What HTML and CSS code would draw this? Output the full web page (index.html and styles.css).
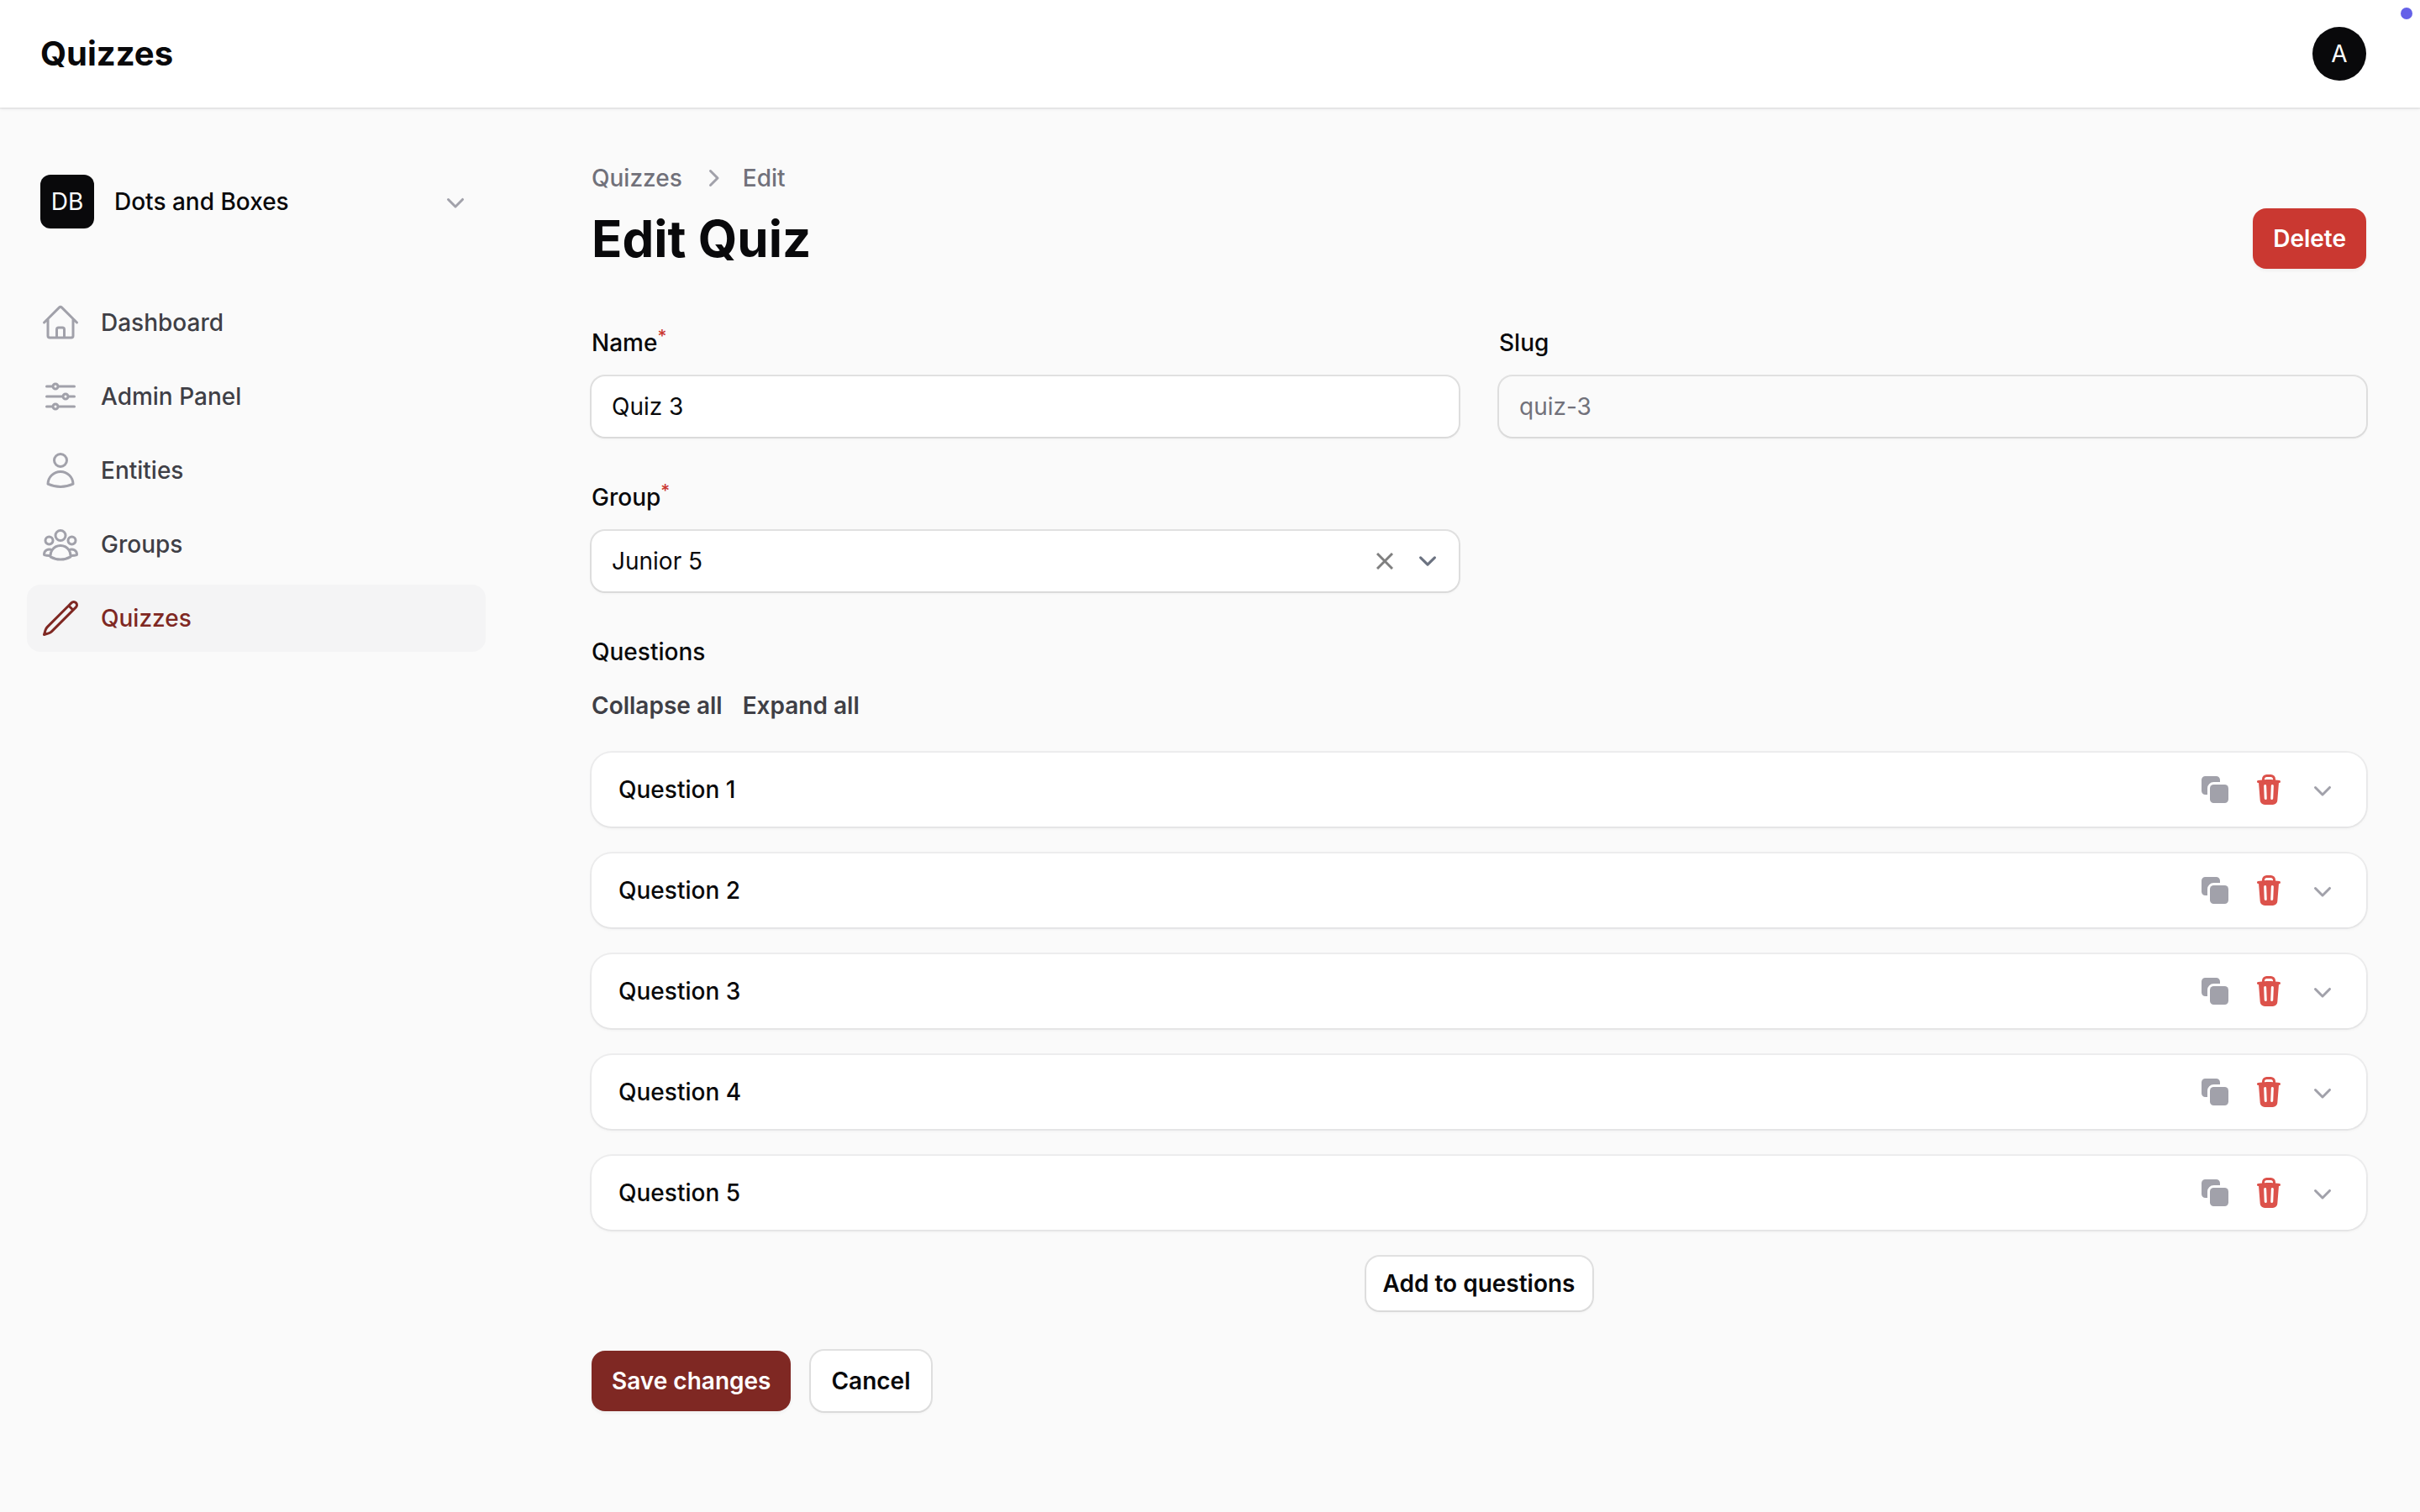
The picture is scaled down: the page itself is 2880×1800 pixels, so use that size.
FILE: index.html
```html
<!DOCTYPE html>
<html lang="en">
<head>
<meta charset="utf-8">
<meta name="viewport" content="width=device-width, initial-scale=1">
<title>Edit Quiz - Quizzes</title>
<link rel="stylesheet" href="styles.css">
</head>
<body>
<svg class="sprite" aria-hidden="true">
  <symbol id="chevron-down" viewBox="0 0 20 20"><path fill-rule="evenodd" d="M5.22 8.22a.75.75 0 0 1 1.06 0L10 11.94l3.72-3.72a.75.75 0 1 1 1.06 1.06l-4.25 4.25a.75.75 0 0 1-1.06 0L5.22 9.28a.75.75 0 0 1 0-1.06Z"/></symbol>
  <symbol id="clone" viewBox="0 0 20 20"><path d="M2 4.25A2.25 2.25 0 0 1 4.25 2h6.5A2.25 2.25 0 0 1 13 4.25V5.5H9.25A3.75 3.75 0 0 0 5.5 9.25V13H4.25A2.25 2.25 0 0 1 2 10.75v-6.5Z"/><path d="M9.25 7A2.25 2.25 0 0 0 7 9.25v6.5A2.25 2.25 0 0 0 9.25 18h6.5A2.25 2.25 0 0 0 18 15.75v-6.5A2.25 2.25 0 0 0 15.75 7h-6.5Z"/></symbol>
  <symbol id="trash" viewBox="0 0 20 20"><path fill-rule="evenodd" d="M8.75 1A2.75 2.75 0 0 0 6 3.75v.443c-.795.077-1.584.176-2.365.298a.75.75 0 1 0 .23 1.482l.149-.022.841 10.518A2.75 2.75 0 0 0 7.596 19h4.807a2.75 2.75 0 0 0 2.742-2.53l.841-10.52.149.023a.75.75 0 0 0 .23-1.482A41.03 41.03 0 0 0 14 4.193V3.75A2.75 2.75 0 0 0 11.25 1h-2.5ZM10 4c.84 0 1.673.025 2.5.075V3.75c0-.69-.56-1.25-1.25-1.25h-2.5c-.69 0-1.25.56-1.25 1.25v.325C8.327 4.025 9.16 4 10 4ZM8.58 7.72a.75.75 0 0 0-1.5.06l.3 7.5a.75.75 0 1 0 1.5-.06l-.3-7.5Zm4.34.06a.75.75 0 1 0-1.5-.06l-.3 7.5a.75.75 0 1 0 1.5.06l.3-7.5Z"/></symbol>
</svg>

<header class="topbar">
  <a class="brand" href="#">Quizzes</a>
  <button class="avatar avatar-round" type="button" aria-label="User menu">A</button>
  <span class="status-dot"></span>
</header>

<div class="layout">
  <aside class="sidebar">
    <button class="tenant" type="button">
      <span class="avatar">DB</span>
      <span class="tenant-name">Dots and Boxes</span>
      <svg class="icon"><use href="#chevron-down"/></svg>
    </button>
    <nav class="nav" aria-label="Main">
      <a class="nav-item" href="#">
        <svg class="nav-icon" viewBox="0 0 24 24"><path d="m2.25 12 8.954-8.955c.44-.439 1.152-.439 1.591 0L21.75 12M4.5 9.75v10.125c0 .621.504 1.125 1.125 1.125H9.75v-4.875c0-.621.504-1.125 1.125-1.125h2.25c.621 0 1.125.504 1.125 1.125V21h4.125c.621 0 1.125-.504 1.125-1.125V9.75M8.25 21h8.25"/></svg>
        <span>Dashboard</span>
      </a>
      <a class="nav-item" href="#">
        <svg class="nav-icon" viewBox="0 0 24 24"><path d="M10.5 6h9.75M10.5 6a1.5 1.5 0 1 1-3 0m3 0a1.5 1.5 0 1 0-3 0M3.75 6H7.5m3 12h9.75m-9.75 0a1.5 1.5 0 0 1-3 0m3 0a1.5 1.5 0 0 0-3 0m-3.75 0H7.5m9-6h3.75m-3.75 0a1.5 1.5 0 0 1-3 0m3 0a1.5 1.5 0 0 0-3 0m-9.75 0h9.75"/></svg>
        <span>Admin Panel</span>
      </a>
      <a class="nav-item" href="#">
        <svg class="nav-icon" viewBox="0 0 24 24"><path d="M15.75 6a3.75 3.75 0 1 1-7.5 0 3.75 3.75 0 0 1 7.5 0ZM4.501 20.118a7.5 7.5 0 0 1 14.998 0A17.933 17.933 0 0 1 12 21.75c-2.676 0-5.216-.584-7.499-1.632Z"/></svg>
        <span>Entities</span>
      </a>
      <a class="nav-item" href="#">
        <svg class="nav-icon" viewBox="0 0 24 24"><path d="M18 18.72a9.094 9.094 0 0 0 3.741-.479 3 3 0 0 0-4.682-2.72m.94 3.198.001.031c0 .225-.012.447-.037.666A11.944 11.944 0 0 1 12 21c-2.17 0-4.207-.576-5.963-1.584A6.062 6.062 0 0 1 6 18.719m12 0a5.971 5.971 0 0 0-.941-3.197m0 0A5.995 5.995 0 0 0 12 12.75a5.995 5.995 0 0 0-5.058 2.772m0 0a3 3 0 0 0-4.681 2.72 8.986 8.986 0 0 0 3.74.477m.94-3.197a5.971 5.971 0 0 0-.94 3.197M15 6.75a3 3 0 1 1-6 0 3 3 0 0 1 6 0Zm6 3a2.25 2.25 0 1 1-4.5 0 2.25 2.25 0 0 1 4.5 0Zm-13.5 0a2.25 2.25 0 1 1-4.5 0 2.25 2.25 0 0 1 4.5 0Z"/></svg>
        <span>Groups</span>
      </a>
      <a class="nav-item active" href="#" aria-current="page">
        <svg class="nav-icon" viewBox="0 0 24 24"><path d="m16.862 4.487 1.687-1.688a1.875 1.875 0 1 1 2.652 2.652L6.832 19.82a4.5 4.5 0 0 1-1.897 1.13l-2.685.8.8-2.685a4.5 4.5 0 0 1 1.13-1.897L16.863 4.487Zm0 0L19.5 7.125"/></svg>
        <span>Quizzes</span>
      </a>
    </nav>
  </aside>

  <main class="main">
    <header class="page-header">
      <div class="page-heading">
        <nav class="breadcrumbs" aria-label="Breadcrumb">
          <a href="#">Quizzes</a>
          <svg class="icon" viewBox="0 0 20 20"><path fill-rule="evenodd" d="M8.22 5.22a.75.75 0 0 1 1.06 0l4.25 4.25a.75.75 0 0 1 0 1.06l-4.25 4.25a.75.75 0 0 1-1.06-1.06L11.94 10 8.22 6.28a.75.75 0 0 1 0-1.06Z"/></svg>
          <span>Edit</span>
        </nav>
        <h1>Edit Quiz</h1>
      </div>
      <button class="btn btn-danger" type="button">Delete</button>
    </header>

    <form class="form">
      <div class="fields">
        <div class="field">
          <label for="name">Name<sup>*</sup></label>
          <input class="control" id="name" type="text" value="Quiz 3" required>
        </div>
        <div class="field">
          <label for="slug">Slug</label>
          <input class="control" id="slug" type="text" value="quiz-3" disabled>
        </div>
        <div class="field">
          <label for="group">Group<sup>*</sup></label>
          <div class="control select">
            <select id="group" required><option>Junior 5</option></select>
            <button class="clear" type="button" aria-label="Clear group"><svg viewBox="0 0 20 20"><path d="m1 1 18 18m0-18-18 18"/></svg></button>
            <svg class="select-arrow" viewBox="0 0 20 20"><path d="m6 8 4 4 4-4"/></svg>
          </div>
        </div>
      </div>

      <section class="field" aria-labelledby="questions-label">
        <h2 id="questions-label">Questions</h2>
        <div class="questions">
          <div class="links">
            <button type="button">Collapse all</button>
            <button type="button">Expand all</button>
          </div>
          <ul class="cards">
            <li class="card">
              <h3>Question 1</h3>
              <button class="icon-btn" type="button" aria-label="Clone"><svg class="icon"><use href="#clone"/></svg></button>
              <button class="icon-btn danger" type="button" aria-label="Delete"><svg class="icon"><use href="#trash"/></svg></button>
              <button class="icon-btn" type="button" aria-label="Expand"><svg class="icon"><use href="#chevron-down"/></svg></button>
            </li>
            <li class="card">
              <h3>Question 2</h3>
              <button class="icon-btn" type="button" aria-label="Clone"><svg class="icon"><use href="#clone"/></svg></button>
              <button class="icon-btn danger" type="button" aria-label="Delete"><svg class="icon"><use href="#trash"/></svg></button>
              <button class="icon-btn" type="button" aria-label="Expand"><svg class="icon"><use href="#chevron-down"/></svg></button>
            </li>
            <li class="card">
              <h3>Question 3</h3>
              <button class="icon-btn" type="button" aria-label="Clone"><svg class="icon"><use href="#clone"/></svg></button>
              <button class="icon-btn danger" type="button" aria-label="Delete"><svg class="icon"><use href="#trash"/></svg></button>
              <button class="icon-btn" type="button" aria-label="Expand"><svg class="icon"><use href="#chevron-down"/></svg></button>
            </li>
            <li class="card">
              <h3>Question 4</h3>
              <button class="icon-btn" type="button" aria-label="Clone"><svg class="icon"><use href="#clone"/></svg></button>
              <button class="icon-btn danger" type="button" aria-label="Delete"><svg class="icon"><use href="#trash"/></svg></button>
              <button class="icon-btn" type="button" aria-label="Expand"><svg class="icon"><use href="#chevron-down"/></svg></button>
            </li>
            <li class="card">
              <h3>Question 5</h3>
              <button class="icon-btn" type="button" aria-label="Clone"><svg class="icon"><use href="#clone"/></svg></button>
              <button class="icon-btn danger" type="button" aria-label="Delete"><svg class="icon"><use href="#trash"/></svg></button>
              <button class="icon-btn" type="button" aria-label="Expand"><svg class="icon"><use href="#chevron-down"/></svg></button>
            </li>
          </ul>
          <button class="btn btn-outline btn-small" type="button">Add to questions</button>
        </div>
      </section>

      <div class="actions">
        <button class="btn btn-primary" type="submit">Save changes</button>
        <button class="btn btn-outline" type="button">Cancel</button>
      </div>
    </form>
  </main>
</div>
</body>
</html>
```
FILE: styles.css
```css
:root {
  --gray-50: #fafafa;
  --gray-100: #f4f4f5;
  --gray-400: #a1a1aa;
  --gray-500: #71717a;
  --gray-700: #3f3f46;
  --gray-950: #09090b;
  --primary: #7f2823;
  --danger: #ca3831;
  --danger-light: #dc524b;
  --shadow: 0 2px 4px rgba(0, 0, 0, 0.05);
  --ring: 0 0 0 2px rgba(9, 9, 11, 0.1);
  --ring-soft: 0 0 0 2px rgba(9, 9, 11, 0.05);
}

* {
  box-sizing: border-box;
}

body {
  margin: 0;
  background: var(--gray-50);
  color: var(--gray-950);
  font: 400 28px/40px Inter, sans-serif;
}

a {
  color: inherit;
  text-decoration: none;
}

button,
input,
select {
  margin: 0;
  padding: 0;
  border: 0;
  background: none;
  color: inherit;
  font: inherit;
}

button {
  cursor: pointer;
}

h1,
h2,
h3 {
  margin: 0;
  font-size: 28px;
  font-weight: 500;
}

.sprite {
  position: absolute;
  width: 0;
  height: 0;
}

.icon {
  flex: none;
  display: block;
  width: 40px;
  height: 40px;
  fill: currentColor;
  color: var(--gray-400);
}

.topbar {
  position: relative;
  display: flex;
  align-items: center;
  justify-content: space-between;
  height: 128px;
  padding: 0 64px 0 48px;
  background: #fff;
  box-shadow: var(--ring-soft), var(--shadow);
}

.brand {
  font-size: 40px;
  font-weight: 700;
}

.status-dot {
  position: absolute;
  top: 9px;
  right: 9px;
  width: 14px;
  height: 14px;
  border-radius: 50%;
  background: #6561e8;
}

.avatar {
  display: flex;
  flex: none;
  align-items: center;
  justify-content: center;
  width: 64px;
  height: 64px;
  border-radius: 12px;
  background: var(--gray-950);
  color: #fff;
  font-weight: 400;
}

.avatar-round {
  border-radius: 50%;
}

.layout {
  display: flex;
}

.sidebar {
  display: flex;
  flex: none;
  flex-direction: column;
  gap: 56px;
  width: 640px;
  padding: 64px 62px 64px 32px;
  font-weight: 500;
}

.tenant {
  display: flex;
  align-items: center;
  gap: 24px;
  padding: 16px;
  font-weight: 500;
  text-align: left;
}

.tenant-name {
  flex: 1;
}

.nav {
  display: flex;
  flex-direction: column;
  gap: 8px;
}

.nav-item {
  display: flex;
  align-items: center;
  gap: 24px;
  height: 80px;
  padding: 16px;
  border-radius: 16px;
  color: var(--gray-700);
}

.nav-icon {
  width: 48px;
  height: 48px;
  fill: none;
  stroke: var(--gray-400);
  stroke-width: 1.5;
  stroke-linecap: round;
  stroke-linejoin: round;
}

.nav-item.active {
  background: var(--gray-100);
  color: var(--primary);
}

.nav-item.active .nav-icon {
  stroke: currentColor;
}

.main {
  display: flex;
  flex: 1;
  flex-direction: column;
  gap: 64px;
  min-width: 0;
  padding: 64px;
}

.page-header {
  display: flex;
  align-items: flex-end;
  justify-content: space-between;
}

.page-heading {
  display: flex;
  flex-direction: column;
  gap: 16px;
}

.breadcrumbs {
  display: flex;
  gap: 16px;
  color: var(--gray-500);
  font-weight: 500;
}

h1 {
  font-size: 60px;
  font-weight: 700;
  line-height: 72px;
}

.form,
.questions {
  display: flex;
  flex-direction: column;
}

.form {
  gap: 48px;
}

.fields {
  display: grid;
  grid-template-columns: 1fr 1fr;
  gap: 48px;
}

.field {
  display: flex;
  flex-direction: column;
  gap: 16px;
}

.field > label,
.field > h2 {
  height: 48px;
  font-weight: 500;
  line-height: 48px;
}

sup {
  color: var(--danger);
  font-size: 21px;
  line-height: 0;
}

.control {
  width: 100%;
  height: 72px;
  padding: 0 24px;
  border-radius: 16px;
  background: #fff;
  box-shadow: var(--ring), var(--shadow);
}

.control:disabled {
  background: var(--gray-50);
  color: var(--gray-500);
}

.select {
  display: flex;
  align-items: center;
  padding-right: 16px;
}

.select select {
  flex: 1;
  height: 100%;
  appearance: none;
}

.clear {
  display: flex;
  align-items: center;
  justify-content: center;
  width: 40px;
  height: 40px;
  margin-right: 10px;
}

.clear svg {
  width: 20px;
  height: 20px;
  stroke: #7f7f7f;
  stroke-width: 3;
}

.select-arrow {
  width: 42px;
  height: 42px;
  fill: none;
  stroke: #6b7280;
  stroke-width: 1.5;
  stroke-linecap: round;
  stroke-linejoin: round;
}

.questions {
  gap: 32px;
}

.links {
  display: flex;
  gap: 24px;
  height: 48px;
}

.links button {
  color: var(--gray-700);
  font-weight: 600;
}

.cards {
  display: flex;
  flex-direction: column;
  gap: 32px;
  margin: 0;
  padding: 0;
  list-style: none;
}

.card {
  display: flex;
  align-items: center;
  gap: 24px;
  padding: 24px 32px;
  border-radius: 24px;
  background: #fff;
  box-shadow: var(--ring-soft), var(--shadow);
}

.card h3 {
  flex: 1;
}

.icon-btn.danger .icon {
  color: var(--danger-light);
}

.btn {
  padding: 16px 24px;
  border-radius: 16px;
  box-shadow: var(--shadow);
  font-weight: 600;
}

.btn-danger {
  background: var(--danger);
  color: #fff;
}

.btn-primary {
  background: var(--primary);
  color: #fff;
}

.btn-outline {
  background: #fff;
  box-shadow: var(--ring), var(--shadow);
}

.btn-small {
  align-self: center;
  padding: 12px 20px;
}

.actions {
  display: flex;
  gap: 24px;
}
```
